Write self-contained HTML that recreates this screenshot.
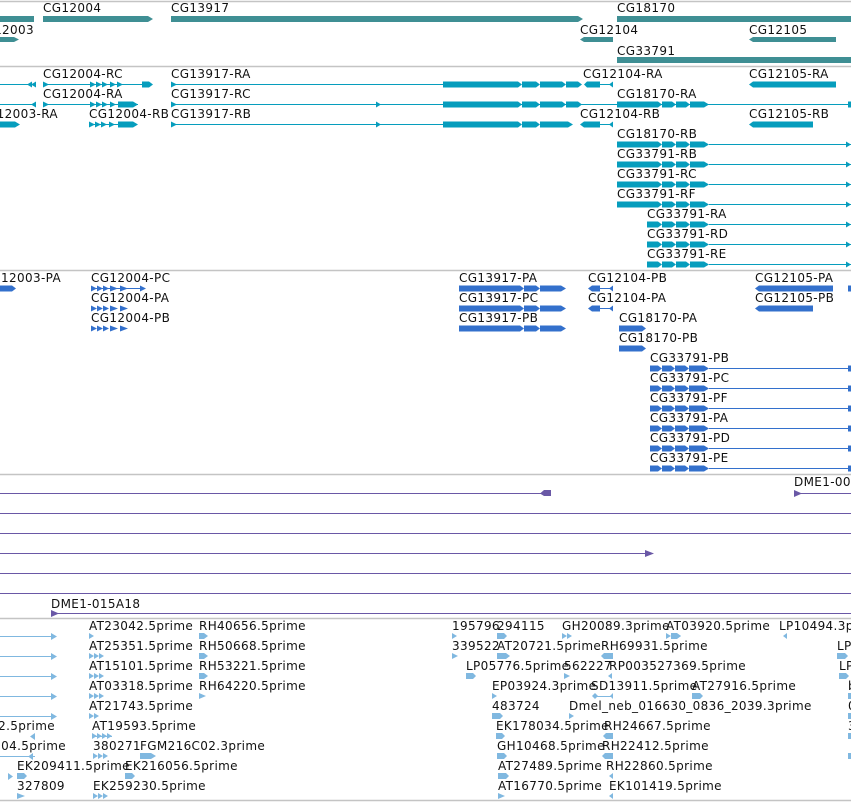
<!DOCTYPE html>
<html><head><meta charset="utf-8"><style>
html,body{margin:0;padding:0;background:#fff;width:851px;height:802px;overflow:hidden}
svg{display:block}
text{font-family:"DejaVu Sans","Liberation Sans",sans-serif;font-size:12px;letter-spacing:0.35px;fill:#111}
.sep{stroke:#c4c4c4;stroke-width:1.5}
</style></head><body>
<svg width="851" height="802" viewBox="0 0 851 802" xmlns="http://www.w3.org/2000/svg">
<defs>
<g id="a3"><polygon points="0,0 5,3 0,6"/><polygon points="5,0 10,3 5,6"/><polygon points="10,0 15,3 10,6"/></g>
</defs>
<line class="sep" x1="0" y1="1.5" x2="851" y2="1.5"/>
<line class="sep" x1="0" y1="66.5" x2="851" y2="66.5"/>
<line class="sep" x1="0" y1="270.5" x2="851" y2="270.5"/>
<line class="sep" x1="0" y1="474.5" x2="851" y2="474.5"/>
<line class="sep" x1="0" y1="618.5" x2="851" y2="618.5"/>
<line class="sep" x1="0" y1="800.5" x2="851" y2="800.5"/>

<!-- Track 1 genes -->
<g fill="#3f8f94">
<rect x="0" y="16" width="34" height="6"/>
<polygon points="43,16 148,16 153,19 148,22 43,22"/>
<polygon points="171,16 578,16 583,19 578,22 171,22"/>
<rect x="617" y="16" width="234" height="6"/>
<polygon points="0,37 14,37 19,39.5 14,42 0,42"/>
<polygon points="584,37 613,37 613,42 584,42 580,39.5"/>
<polygon points="753,37 836,37 836,42 753,42 749,39.5"/>
<rect x="617" y="57" width="234" height="6"/>
</g>
<text x="43" y="12">CG12004</text><text x="171" y="12">CG13917</text><text x="617" y="12">CG18170</text>
<text x="34" y="34" text-anchor="end">CG12003</text><text x="580" y="34">CG12104</text><text x="749" y="34">CG12105</text>
<text x="617" y="55">CG33791</text>

<!-- Track 2 transcripts -->
<g fill="#069dbd" stroke="none">
<rect x="0" y="84" width="35" height="1"/><polygon points="27,84.5 32,81.5 32,87.5"/><polygon points="31,84.5 36,81.5 36,87.5"/>
<rect x="43" y="84" width="109" height="1"/>
<polygon points="43,81.5 49,84.5 43,87.5"/>
<polygon points="90,81.5 96,84.5 90,87.5"/><polygon points="96,81.5 102,84.5 96,87.5"/><polygon points="102,81.5 108,84.5 102,87.5"/><polygon points="110,81.5 116,84.5 110,87.5"/><polygon points="117,81.5 123,84.5 117,87.5"/>
<polygon points="142,81.5 149,81.5 153,84.5 149,87.5 142,87.5"/>
<rect x="171" y="84" width="272" height="1"/><polygon points="171,81.5 177,84.5 171,87.5"/>
<polygon points="443,81.5 518,81.5 522,84.5 518,87.5 443,87.5"/><polygon points="522,81.5 536,81.5 540,84.5 536,87.5 522,87.5"/><polygon points="540,81.5 562,81.5 566,84.5 562,87.5 540,87.5"/><polygon points="566,81.5 578,81.5 582,84.5 578,87.5 566,87.5"/>
<polygon points="587,81.5 600,81.5 600,87.5 587,87.5 584,84.5"/><rect x="600" y="84" width="13" height="1"/><polygon points="613,81.5 609,84.5 613,87.5"/>
<polygon points="753,81.5 836,81.5 836,87.5 753,87.5 749,84.5"/>
<rect x="0" y="104" width="35" height="1"/><polygon points="31,104.5 36,101.5 36,107.5"/>
<rect x="43" y="104" width="95" height="1"/><polygon points="43,101.5 49,104.5 43,107.5"/>
<polygon points="90,101.5 96,104.5 90,107.5"/><polygon points="96,101.5 102,104.5 96,107.5"/><polygon points="102,101.5 108,104.5 102,107.5"/><polygon points="110,101.5 116,104.5 110,107.5"/>
<polygon points="118,101.5 133,101.5 138,104.5 133,107.5 118,107.5"/>
<rect x="171" y="104" width="680" height="1"/><polygon points="171,101.5 177,104.5 171,107.5"/><polygon points="376,101.5 381,104.5 376,107.5"/>
<polygon points="443,101.5 518,101.5 522,104.5 518,107.5 443,107.5"/><polygon points="522,101.5 536,101.5 540,104.5 536,107.5 522,107.5"/><polygon points="540,101.5 562,101.5 566,104.5 562,107.5 540,107.5"/><polygon points="566,101.5 578,101.5 582,104.5 578,107.5 566,107.5"/>
<polygon points="617,101.5 658,101.5 662,104.5 658,107.5 617,107.5"/><polygon points="662,101.5 672,101.5 676,104.5 672,107.5 662,107.5"/><polygon points="676,101.5 686,101.5 690,104.5 686,107.5 676,107.5"/><polygon points="690,101.5 704,101.5 709,104.5 704,107.5 690,107.5"/>
<rect x="848" y="101.5" width="3" height="6"/>
<polygon points="0,121.5 15,121.5 20,124.5 15,127.5 0,127.5"/>
<rect x="89" y="124" width="48" height="1"/>
<polygon points="89,121.5 95,124.5 89,127.5"/><polygon points="95,121.5 101,124.5 95,127.5"/><polygon points="101,121.5 107,124.5 101,127.5"/><polygon points="109,121.5 115,124.5 109,127.5"/><polygon points="118,121.5 133,121.5 138,124.5 133,127.5 118,127.5"/>
<rect x="171" y="124" width="272" height="1"/><polygon points="171,121.5 177,124.5 171,127.5"/><polygon points="376,121.5 381,124.5 376,127.5"/>
<polygon points="443,121.5 518,121.5 522,124.5 518,127.5 443,127.5"/><polygon points="522,121.5 536,121.5 540,124.5 536,127.5 522,127.5"/><polygon points="540,121.5 568,121.5 573,124.5 568,127.5 540,127.5"/>
<polygon points="584,121.5 600,121.5 600,127.5 584,127.5 580,124.5"/><rect x="600" y="124" width="13" height="1"/><polygon points="613,121.5 609,124.5 613,127.5"/>
<polygon points="753,121.5 813,121.5 813,127.5 753,127.5 749,124.5"/>
</g>
<g fill="#069dbd">
<g id="tr"><polygon points="617,141.5 658,141.5 662,144.5 658,147.5 617,147.5"/><polygon points="662,141.5 672,141.5 676,144.5 672,147.5 662,147.5"/><polygon points="676,141.5 686,141.5 690,144.5 686,147.5 676,147.5"/><polygon points="690,141.5 704,141.5 709,144.5 704,147.5 690,147.5"/><rect x="709" y="144" width="142" height="1"/><polygon points="846,141.5 851,144.5 846,147.5"/></g>
<use href="#tr" y="20"/><use href="#tr" y="40"/><use href="#tr" y="60"/>
<g id="tr2"><polygon points="647,221.5 658,221.5 662,224.5 658,227.5 647,227.5"/><polygon points="662,221.5 672,221.5 676,224.5 672,227.5 662,227.5"/><polygon points="676,221.5 686,221.5 690,224.5 686,227.5 676,227.5"/><polygon points="690,221.5 704,221.5 709,224.5 704,227.5 690,227.5"/><rect x="709" y="224" width="142" height="1"/><polygon points="846,221.5 851,224.5 846,227.5"/></g>
<use href="#tr2" y="20"/><use href="#tr2" y="40"/>
</g>
<text x="43" y="78">CG12004-RC</text><text x="171" y="78">CG13917-RA</text><text x="583" y="78">CG12104-RA</text><text x="749" y="78">CG12105-RA</text>
<text x="43" y="98">CG12004-RA</text><text x="171" y="98">CG13917-RC</text><text x="617" y="98">CG18170-RA</text>
<text x="58" y="118" text-anchor="end">CG12003-RA</text><text x="89" y="118">CG12004-RB</text><text x="171" y="118">CG13917-RB</text><text x="580" y="118">CG12104-RB</text><text x="749" y="118">CG12105-RB</text>
<text x="617" y="138">CG18170-RB</text><text x="617" y="158">CG33791-RB</text><text x="617" y="178">CG33791-RC</text><text x="617" y="198">CG33791-RF</text>
<text x="647" y="218">CG33791-RA</text><text x="647" y="238">CG33791-RD</text><text x="647" y="258">CG33791-RE</text>

<!-- Track 3 proteins -->
<g fill="#3370cc">
<polygon points="0,285.5 12,285.5 16,288.5 12,291.5 0,291.5"/>
<g id="pc"><polygon points="91,285.5 97,288.5 91,291.5"/><polygon points="97,285.5 103,288.5 97,291.5"/><polygon points="103,285.5 109,288.5 103,291.5"/><polygon points="110,285.5 118,288.5 110,291.5"/><polygon points="120,285.5 128,288.5 120,291.5"/></g>
<rect x="91" y="288" width="54" height="1"/><polygon points="140,285.5 146,288.5 140,291.5"/>
<use href="#pc" y="20"/><use href="#pc" y="40"/>
<g id="pp"><polygon points="459,285.5 520,285.5 524,288.5 520,291.5 459,291.5"/><polygon points="524,285.5 536,285.5 540,288.5 536,291.5 524,291.5"/><polygon points="540,285.5 561,285.5 566,288.5 561,291.5 540,291.5"/></g>
<use href="#pp" y="20"/><use href="#pp" y="40"/>
<g id="p4"><polygon points="592,285.5 600,285.5 600,291.5 592,291.5 588,288.5"/><rect x="600" y="288" width="13" height="1"/><polygon points="613,285.5 609,288.5 613,291.5"/></g>
<use href="#p4" y="20"/>
<polygon points="759,285.5 833,285.5 833,291.5 759,291.5 755,288.5"/><rect x="848" y="285.5" width="3" height="6"/>
<polygon points="759,305.5 813,305.5 813,311.5 759,311.5 755,308.5"/>
<polygon points="619,325.5 642,325.5 646,328.5 642,331.5 619,331.5"/>
<polygon points="619,345.5 642,345.5 646,348.5 642,351.5 619,351.5"/>
<g id="pq"><polygon points="650,365.5 658,365.5 662,368.5 658,371.5 650,371.5"/><polygon points="662,365.5 671,365.5 675,368.5 671,371.5 662,371.5"/><polygon points="675,365.5 685,365.5 689,368.5 685,371.5 675,371.5"/><polygon points="689,365.5 704,365.5 709,368.5 704,371.5 689,371.5"/><rect x="709" y="368" width="142" height="1"/><rect x="848" y="365.5" width="3" height="6"/></g>
<use href="#pq" y="20"/><use href="#pq" y="40"/><use href="#pq" y="60"/><use href="#pq" y="80"/><use href="#pq" y="100"/>
</g>
<text x="61" y="282" text-anchor="end">CG12003-PA</text><text x="91" y="282">CG12004-PC</text><text x="459" y="282">CG13917-PA</text><text x="588" y="282">CG12104-PB</text><text x="755" y="282">CG12105-PA</text>
<text x="91" y="302">CG12004-PA</text><text x="459" y="302">CG13917-PC</text><text x="588" y="302">CG12104-PA</text><text x="755" y="302">CG12105-PB</text>
<text x="91" y="322">CG12004-PB</text><text x="459" y="322">CG13917-PB</text><text x="619" y="322">CG18170-PA</text>
<text x="619" y="342">CG18170-PB</text>
<text x="650" y="362">CG33791-PB</text><text x="650" y="382">CG33791-PC</text><text x="650" y="402">CG33791-PF</text><text x="650" y="422">CG33791-PA</text><text x="650" y="442">CG33791-PD</text><text x="650" y="462">CG33791-PE</text>

<!-- Track 4 -->
<g fill="#6a58a6">
<rect x="0" y="493" width="545" height="1"/><polygon points="544,490 551,490 551,496 544,496 540,493.5"/>
<rect x="0" y="513" width="851" height="1"/><rect x="0" y="533" width="851" height="1"/>
<rect x="0" y="553" width="650" height="1"/><polygon points="645,550 654,553.5 645,557"/>
<rect x="0" y="573" width="851" height="1"/><rect x="0" y="593" width="851" height="1"/>
<rect x="51" y="613" width="800" height="1"/><polygon points="51,610 59,613.5 51,617"/>
<rect x="794" y="493" width="57" height="1"/><polygon points="794,490 802,493.5 794,497"/>
</g>
<text x="794" y="486">DME1-00</text>
<text x="51" y="608">DME1-015A18</text>

<!-- Track 5 ESTs -->
<g fill="#80b8e0">
<g id="el"><rect x="0" y="636" width="55" height="1"/><polygon points="51,633 57,636.5 51,640"/></g>
<use href="#el" y="20"/><use href="#el" y="40"/><use href="#el" y="60"/><use href="#el" y="80"/>
<rect x="0" y="756" width="35" height="1"/><polygon points="28,756.5 33,753 33,760"/><polygon points="30,736.5 35,733 35,740"/><polygon points="13,776.5 8,773 8,780"/>
<polygon points="89,633 94,636 89,639"/>
<use href="#a3" x="89" y="653"/><use href="#a3" x="89" y="673"/><use href="#a3" x="89" y="693"/>
<polygon points="89,713 94,716 89,719"/><polygon points="94,713 99,716 94,719"/>
<use href="#a3" x="92" y="733"/><rect x="92" y="736" width="20" height="1"/><polygon points="107,733 112,736 107,739"/>
<use href="#a3" x="93" y="753"/><polygon points="140,753 151,753 156,756 151,759 140,759"/>
<use href="#a3" x="93" y="793"/>
<polygon points="17,773 24,773 27,776 24,779 17,779"/><polygon points="17,793 25,796 17,799"/>
<polygon points="125,773 132,773 135,776 132,779 125,779"/>
<g id="rh"><polygon points="199,633 204,633 208,636 204,639 199,639"/></g>
<use href="#rh" y="20"/><use href="#rh" y="40"/><polygon points="199,693 206,696 199,699"/>
<polygon points="452,633 457,636 452,639"/><polygon points="452,653 458,656 452,659"/>
<polygon points="497,633 504,633 507,636 504,639 497,639"/><polygon points="497,653 506,653 510,656 506,659 497,659"/>
<polygon points="562,633 567,636 562,639"/><polygon points="567,633 572,636 567,639"/>
<use href="#a3" x="666" y="633"/><polygon points="671,633 677,633 681,636 677,639 671,639"/>
<polygon points="787,633 783,636 787,639"/>
<polygon points="604,653 613,653 613,659 604,659 601,656"/>
<polygon points="466,673 473,673 476,676 473,679 466,679"/><polygon points="564,673 570,676 564,679"/><polygon points="612,673 608,676 612,679"/>
<polygon points="837,653 845,653 848,656 845,659 837,659"/><polygon points="839,673 846,673 849,676 846,679 839,679"/>
<polygon points="492,693 497,696 492,699"/><polygon points="692,693 700,693 703,696 700,699 692,699"/>
<rect x="595" y="696" width="18" height="1"/><polygon points="595,693 598,696 595,699 592,696"/><polygon points="613,693 610,696 613,699"/>
<polygon points="492,713 500,713 503,716 500,719 492,719"/><polygon points="569,713 574,716 569,719"/>
<polygon points="496,733 502,733 505,736 502,739 496,739"/><polygon points="497,753 504,753 507,756 504,759 497,759"/>
<polygon points="498,773 506,773 509,776 506,779 498,779"/><polygon points="498,793 505,796 498,799"/>
<polygon points="606,733 613,733 613,739 606,739 603,736"/><polygon points="605,753 613,753 613,759 605,759 602,756"/>
<polygon points="613,773 609,776 613,779"/><polygon points="613,793 609,796 613,799"/>
<rect x="848" y="693" width="3" height="6"/><rect x="848" y="713" width="3" height="6"/><rect x="848" y="733" width="3" height="6"/><rect x="848" y="753" width="3" height="6"/>
</g>
<text x="89" y="630">AT23042.5prime</text><text x="199" y="630">RH40656.5prime</text><text x="452" y="630">195796</text><text x="497" y="630">294115</text><text x="562" y="630">GH20089.3prime</text><text x="666" y="630">AT03920.5prime</text><text x="779" y="630">LP10494.3prime</text>
<text x="89" y="650">AT25351.5prime</text><text x="199" y="650">RH50668.5prime</text><text x="452" y="650">339522</text><text x="497" y="650">AT20721.5prime</text><text x="601" y="650">RH69931.5prime</text><text x="837" y="650">LP</text>
<text x="89" y="670">AT15101.5prime</text><text x="199" y="670">RH53221.5prime</text><text x="466" y="670">LP05776.5prime</text><text x="564" y="670">562227</text><text x="609" y="670">RP003527369.5prime</text><text x="839" y="670">LP</text>
<text x="89" y="690">AT03318.5prime</text><text x="199" y="690">RH64220.5prime</text><text x="492" y="690">EP03924.3prime</text><text x="591" y="690">SD13911.5prime</text><text x="692" y="690">AT27916.5prime</text><text x="848" y="690">b</text>
<text x="89" y="710">AT21743.5prime</text><text x="492" y="710">483724</text><text x="569" y="710">Dmel_neb_016630_0836_2039.3prime</text><text x="848" y="710">0</text>
<text x="55" y="730" text-anchor="end">AT2.5prime</text><text x="92" y="730">AT19593.5prime</text><text x="496" y="730">EK178034.5prime</text><text x="604" y="730">RH24667.5prime</text><text x="848" y="730">3</text>
<text x="66" y="750" text-anchor="end">AT304.5prime</text><text x="93" y="750">380271</text><text x="140" y="750">FGM216C02.3prime</text><text x="497" y="750">GH10468.5prime</text><text x="602" y="750">RH22412.5prime</text>
<text x="17" y="770">EK209411.5prime</text><text x="125" y="770">EK216056.5prime</text><text x="498" y="770">AT27489.5prime</text><text x="606" y="770">RH22860.5prime</text>
<text x="17" y="790">327809</text><text x="93" y="790">EK259230.5prime</text><text x="498" y="790">AT16770.5prime</text><text x="609" y="790">EK101419.5prime</text>
</svg>
</body></html>
